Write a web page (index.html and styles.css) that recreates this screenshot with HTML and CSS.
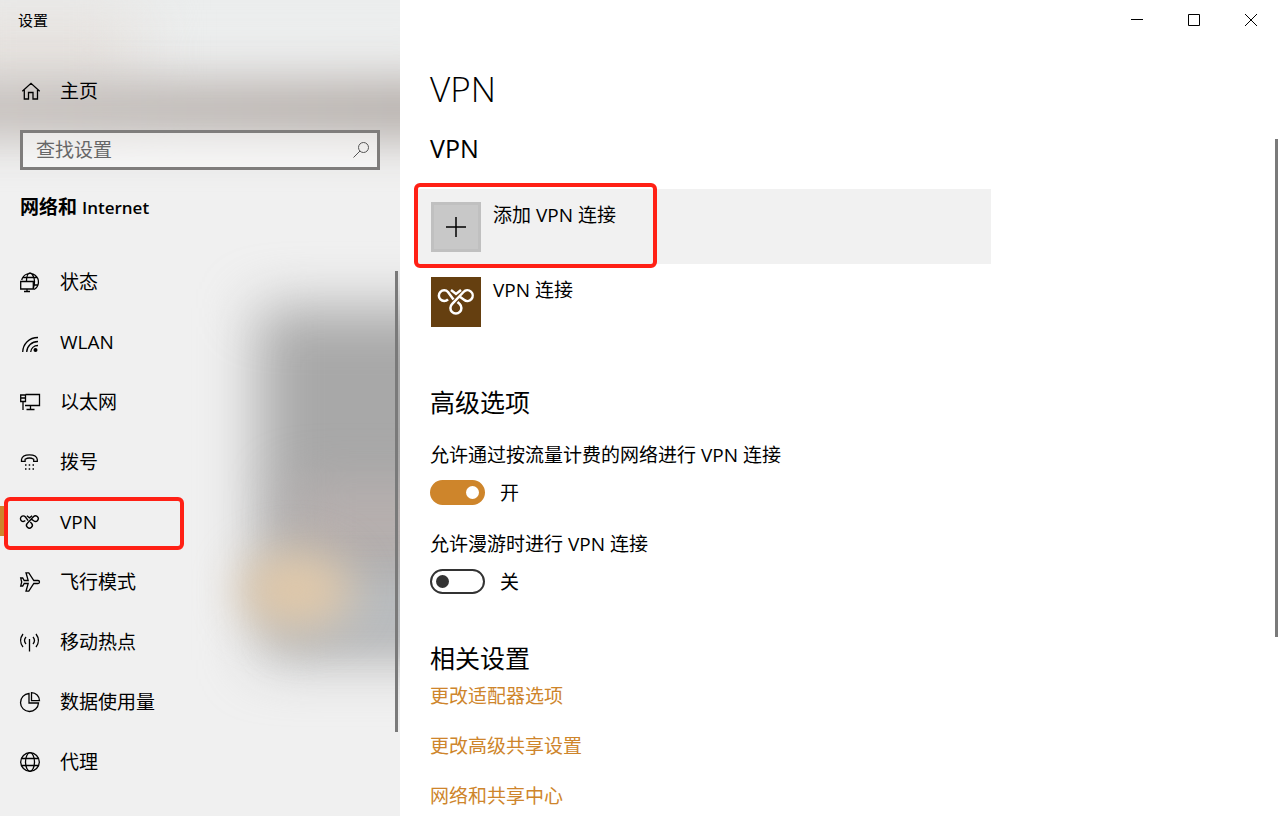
FILE: index.html
```html
<!DOCTYPE html>
<html lang="zh-CN">
<head>
<meta charset="utf-8">
<title>设置</title>
<link rel="stylesheet" href="styles.css">
</head>
<body>
<div class="window">
  <aside class="sidebar">
    <div class="acrylic" aria-hidden="true">
      <span class="blob sky"></span>
      <span class="blob warm"></span>
      <span class="blob band"></span>
      <span class="blob slab"></span>
      <span class="blob rose"></span>
      <span class="blob cool"></span>
      <span class="blob glow"></span>
    </div>
    <div class="title">设置</div>
    <a class="home" href="#">
      <svg class="icon" viewBox="0 0 20 20"><path d="M2.300 10.300 11 2.300l8.700 8M4.300 9v9h4.200v-6.500h4.500v6.500h4.500V9"/></svg>
      <span>主页</span>
    </a>
    <form class="search">
      <input class="search-box" type="text" placeholder="查找设置" aria-label="查找设置">
      <button class="search-button" type="button" aria-label="搜索">
        <svg class="icon" viewBox="0 0 20 20"><circle cx="12.500" cy="7.500" r="5"/><path d="M9 11 2.500 17.500"/></svg>
      </button>
    </form>
    <h2 class="group">网络和 <span class="latin">Internet</span></h2>
    <nav class="nav">
      <a class="item" href="#">
        <svg class="icon" viewBox="0 0 20 20"><path d="M1.700 8A8.500 8.500 0 1 1 14 17.500M6.500 9C6.500 4.500 8 1 10 1s4.500 4 4.500 8.500c0 3-.5 5-1.200 7M3 5.500h14.500M13.500 13H18"/><path d="M.7 9.500h12.600V17H.7zM7 17v2.500M4 19.500h6"/></svg>
        <span>状态</span>
      </a>
      <a class="item" href="#">
        <svg class="icon" viewBox="0 0 20 20"><path d="M2.700 20C3 12 9 5.500 18 5.500M6.700 20c.3-6 5-10.500 11.300-10.500M10.700 20c.3-3.500 3-6.500 7.300-6.500"/><circle class="solid" cx="15.500" cy="18" r="2"/></svg>
        <span>WLAN</span>
      </a>
      <a class="item" href="#">
        <svg class="icon" viewBox="0 0 20 20"><path d="M.7 3h4.800v6.500H.7zM.7 6h4.800M3 9.500V18M5.500 2.500h14v11H5M10.500 13.500v4M6.500 17.500h8"/></svg>
        <span>以太网</span>
      </a>
      <a class="item" href="#">
        <svg class="icon" viewBox="0 0 20 20"><path d="M1.500 9.300V7.500C2.500 1.200 16.500 1.200 17.300 7.500v1.800h-3.600V7.200c-2.500-1.400-6-1.400-8.600 0v2.100z"/><path class="dots" d="M5 13h1.500M8.700 13h1.500M12.500 13H14M5 17h1.500M8.700 17h1.500M12.500 17H14"/></svg>
        <span>拨号</span>
      </a>
      <a class="item active" href="#" aria-current="page">
        <svg class="icon knot" viewBox="7 6 38 38"><use href="#knot"/></svg>
        <span>VPN</span>
        <i class="mark mark-nav"></i>
      </a>
      <a class="item" href="#">
        <svg class="icon" viewBox="0 0 20 20"><path d="M.7 6h2l1.500 2.500h4L6 .8h2.800l5 7.700H18c2 0 2 3 0 3h-4.200l-5 7.700H6l2.200-7.700h-4L2.700 14h-2l1-4z"/></svg>
        <span>飞行模式</span>
      </a>
      <a class="item" href="#">
        <svg class="icon" viewBox="0 0 20 20"><path d="M9.500 7v12.500M6 5c-1.700 2-1.700 5 0 7M13 5c1.700 2 1.700 5 0 7M3 2c-3 4-3 9 0 13M16 2c3 4 3 9 0 13"/></svg>
        <span>移动热点</span>
      </a>
      <a class="item" href="#">
        <svg class="icon" viewBox="0 0 20 20"><path d="M9 1.500a9 9 0 1 0 9.500 9.500H9zM11.500.7a8 8 0 0 1 8 8h-8z"/></svg>
        <span>数据使用量</span>
      </a>
      <a class="item" href="#">
        <svg class="icon" viewBox="0 0 20 20"><circle cx="10" cy="10" r="9.300"/><ellipse cx="10" cy="10" rx="4.500" ry="9.300"/><path d="M1.500 6.500h17M1.500 13.500h17"/></svg>
        <span>代理</span>
      </a>
      <i class="scrollbar"></i>
    </nav>
  </aside>
  <main class="content">
    <div class="controls">
      <button class="control" type="button" aria-label="最小化"><svg viewBox="0 0 12 12"><path d="M0 5.500h12"/></svg></button>
      <button class="control" type="button" aria-label="最大化"><svg viewBox="0 0 12 12"><path d="M.5.5h11v11H.5z"/></svg></button>
      <button class="control" type="button" aria-label="关闭"><svg viewBox="0 0 12 12"><path d="M0 0l12 12M12 0 0 12"/></svg></button>
    </div>
    <h1 class="page-title">VPN</h1>
    <section class="section">
      <h2 class="heading">VPN</h2>
      <div class="list">
        <button class="row add" type="button">
          <svg class="tile" viewBox="0 0 50 50"><path d="M15 25h20M25 15v20"/></svg>
          <span>添加 VPN 连接</span>
          <i class="mark mark-add"></i>
        </button>
        <button class="row" type="button">
          <svg class="tile vpn" viewBox="0 0 50 50"><path id="knot" d="M22.500 22.500 17 15A5.300 5.300 0 1 0 17 22.300M20 13l5 4 5-4M28.500 19.500l4.500 3.200A5.300 5.300 0 1 0 32.500 15L21 27.200A5.500 5.500 0 1 0 28.800 27.200L26.500 25"/></svg>
          <span>VPN 连接</span>
        </button>
      </div>
    </section>
    <section class="section">
      <h2 class="heading">高级选项</h2>
      <div class="options">
        <div class="option">
          <label class="option-name" for="metered">允许通过按流量计费的网络进行 VPN 连接</label>
          <div class="switch"><input class="toggle" id="metered" type="checkbox" role="switch" checked><span>开</span></div>
        </div>
        <div class="option">
          <label class="option-name" for="roaming">允许漫游时进行 VPN 连接</label>
          <div class="switch"><input class="toggle" id="roaming" type="checkbox" role="switch"><span>关</span></div>
        </div>
      </div>
    </section>
    <section class="section">
      <h2 class="heading">相关设置</h2>
      <div class="links">
        <a class="link" href="#">更改适配器选项</a>
        <a class="link" href="#">更改高级共享设置</a>
        <a class="link" href="#">网络和共享中心</a>
      </div>
    </section>
    <i class="scrollbar"></i>
  </main>
</div>
</body>
</html>
```

FILE: styles.css
```css
* { box-sizing: border-box; }

body {
  margin: 0;
  background: #fff;
  color: #000;
  font-family: "Open Sans", "Noto Sans CJK SC", sans-serif;
  font-size: 19px;
  font-weight: 400;
  line-height: 30px;
}

a { color: inherit; text-decoration: none; }
button { font: inherit; color: inherit; }
h1, h2 { margin: 0; font-weight: inherit; }

.window {
  display: flex;
  height: 100vh;
  overflow: hidden;
}

/* Navigation pane */
.sidebar {
  position: relative;
  flex: 0 0 400px;
  display: flex;
  flex-direction: column;
  overflow: hidden;
  background: #f0f0f0;
  isolation: isolate;
}

.acrylic {
  position: absolute;
  inset: 0;
  z-index: -1;
}
.blob { position: absolute; filter: blur(28px); }
.sky { left: -60px; right: -60px; top: -60px; height: 120px; background: #ebeded; }
.warm { left: -60px; width: 200px; top: 10px; height: 80px; background: #e6e1dd; filter: blur(32px); }
.band { left: -80px; right: -80px; top: 78px; height: 62px; background: linear-gradient(90deg, #c9c4c1, #b6b0ac); filter: blur(22px); }
.slab { left: 258px; right: -80px; top: 308px; height: 352px; background: linear-gradient(#a8a8a8 50%, #b9b9b9); }
.rose { left: 290px; right: -60px; top: 490px; height: 60px; background: #b9b0af; }
.cool { left: 280px; right: -60px; top: 580px; height: 60px; background: #b9bcbf; filter: blur(20px); }
.glow { left: 240px; width: 112px; top: 550px; height: 80px; background: #dfc8aa; border-radius: 50%; filter: blur(22px); }

.icon {
  flex: none;
  width: 20px;
  height: 20px;
  fill: none;
  stroke: #000;
  stroke-width: 1.3;
  overflow: visible;
}
.solid { fill: #000; stroke: none; }
.dots { stroke-width: 1.5; }
.knot { stroke-width: 2.600; }

.title { padding: 5px 18px; font-size: 15px; }

.home {
  display: flex;
  align-items: center;
  gap: 20px;
  height: 60px;
  margin-top: 21px;
  padding-left: 20px;
}

.search {
  display: flex;
  height: 40px;
  margin: 9px 20px 0;
  border: 3px solid #7f7d7c;
  background: rgba(255, 255, 255, 0.5);
}
.search-box {
  flex: 1;
  min-width: 0;
  padding: 0 13px;
  border: 0;
  outline: 0;
  background: none;
  font: inherit;
}
.search-box::placeholder { color: #666; opacity: 1; }
.search-button { display: flex; align-items: center; padding: 0 6px; border: 0; background: none; }
.search-button .icon { stroke: #555; stroke-width: 1; }

.group {
  margin: 22px 20px 0;
  font-size: 19px;
  font-weight: 700;
  line-height: 30px;
}
.latin { font-size: 17px; font-weight: 600; }

.nav {
  position: relative;
  display: flex;
  flex-direction: column;
  margin-top: 29px;
}
.item {
  position: relative;
  display: flex;
  align-items: center;
  gap: 20px;
  height: 60px;
  padding-left: 20px;
}
.active::before {
  content: "";
  position: absolute;
  left: 0;
  top: 14px;
  width: 5px;
  height: 30px;
  background: #ce852b;
}

.mark {
  position: absolute;
  border: 4px solid #ff2015;
  border-radius: 6px;
}
.mark-nav { left: 4px; top: 5px; width: 180px; height: 53px; }
.mark-add { left: -1px; top: -6px; width: 243px; height: 85px; }

.scrollbar { position: absolute; width: 3px; background: #7a7a7a; }
.nav .scrollbar { right: 2px; top: 19px; height: 461px; }
.content > .scrollbar { right: 2px; top: 139px; height: 498px; }

/* Settings page */
.content {
  position: relative;
  flex: 1;
  min-width: 0;
  padding-left: 30px;
  overflow: hidden;
}

.controls { display: flex; justify-content: flex-end; height: 40px; padding-right: 1px; }
.control {
  display: grid;
  place-items: center;
  width: 57px;
  padding: 0;
  border: 0;
  background: none;
}
.control svg { width: 12px; height: 12px; fill: none; stroke: #000; stroke-width: 1; }

.page-title { margin-top: 24px; font-size: 35px; font-weight: 300; line-height: 50px; }
.heading { font-size: 25px; line-height: 40px; }
.section { margin-top: 43px; }
.page-title + .section { margin-top: 14px; }

.list { display: flex; flex-direction: column; max-width: 576px; margin: 21px 0 0 -15px; }
.row {
  position: relative;
  display: flex;
  align-items: flex-start;
  gap: 12px;
  height: 75px;
  padding: 13px 16px 0;
  border: 0;
  background: none;
  text-align: left;
}
.row span { margin-top: -2px; }
.add { background: #f1f1f1; }
.tile {
  width: 50px;
  height: 50px;
  fill: none;
  stroke: #000;
  stroke-width: 1.5;
  background: #c8c8c8;
  box-shadow: inset 0 0 0 3px #c0c0c0;
}
.vpn { background: #653f10; box-shadow: none; stroke: #fff; stroke-width: 2.500; }

.options { display: flex; flex-direction: column; gap: 23px; margin-top: 18px; }
.option-name { display: block; }
.switch { display: flex; align-items: center; gap: 15px; margin-top: 9px; height: 27px; }
.toggle {
  appearance: none;
  display: flex;
  align-items: center;
  width: 55px;
  height: 25px;
  margin: 0;
  padding: 0 4px;
  border: 2px solid #333;
  border-radius: 13px;
}
.toggle::before { content: ""; width: 13px; height: 13px; border-radius: 50%; background: #333; }
.toggle:checked { justify-content: flex-end; border-color: #ce852b; background: #ce852b; }
.toggle:checked::before { background: #fff; }

.links { display: flex; flex-direction: column; align-items: flex-start; gap: 20px; margin-top: 3px; }
.link { color: #ce852b; }
```
